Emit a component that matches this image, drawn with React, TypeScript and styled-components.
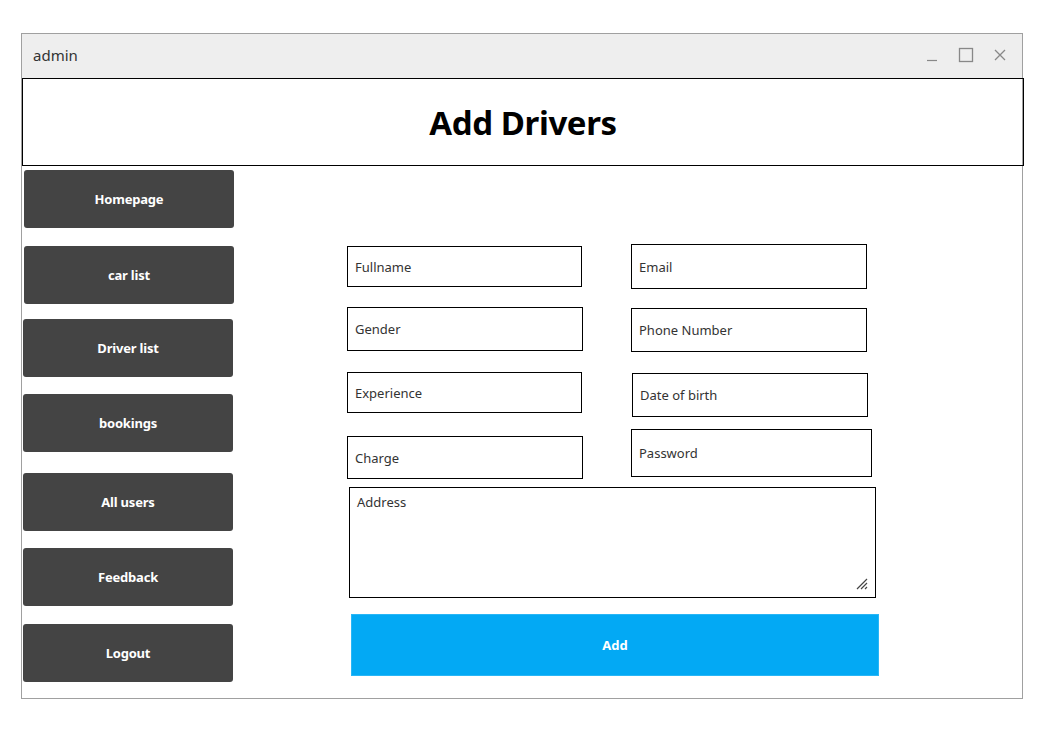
import React from "react";
import styled, { createGlobalStyle } from "styled-components";

const GlobalStyle = createGlobalStyle`
	html, body {
		margin: 0;
		padding: 0;
		background: #fff;
		font-family: "Noto Sans", "Open Sans", sans-serif;
	}
	* {
		box-sizing: border-box;
	}
`;

const Page = styled.div`
	padding: 33px 0 0 21px;
`;

const Window = styled.div`
	width: 1002px;
	height: 666px;
	border: 1px solid #a0a0a0;
	display: flex;
	flex-direction: column;
`;

const TitleBar = styled.div`
	height: 44px;
	background: #eeeeee;
	display: flex;
	align-items: center;
	justify-content: space-between;
	padding: 0 15px 3px 11px;
	color: #333;
	font-size: 15px;
`;

const Controls = styled.div`
	display: flex;
	align-items: center;
	gap: 19px;
`;

const Header = styled.div`
	height: 88px;
	margin-right: -2px;
	border: 1px solid #000;
	display: flex;
	align-items: center;
	justify-content: center;
	font-size: 33px;
	font-weight: 700;
	color: #000;
	letter-spacing: -0.4px;
`;

const Body = styled.div`
	flex: 1;
	display: flex;
`;

const Sidebar = styled.div`
	width: 212px;
	padding-left: 1px;
	display: flex;
	flex-direction: column;
`;

interface NavButtonProps {
	$top: number;
	$left: number;
}

const NavButton = styled.button<NavButtonProps>`
	width: 210px;
	height: 58px;
	margin-top: ${({ $top }) => $top}px;
	margin-left: ${({ $left }) => $left}px;
	background: #444444;
	border: none;
	border-radius: 3px;
	color: #fff;
	font-family: inherit;
	font-size: 13px;
	font-weight: 700;
	letter-spacing: -0.2px;
	cursor: pointer;
`;

const Main = styled.div`
	flex: 1;
	padding: 78px 0 0 113px;
	display: flex;
	flex-direction: column;
`;

interface RowProps {
	$gap: number;
}

const Row = styled.div<RowProps>`
	display: flex;
	align-items: flex-start;
	margin-top: ${({ $gap }) => $gap}px;
`;

interface FieldProps {
	$w: number;
	$h: number;
	$dx?: number;
	$dy?: number;
}

const Field = styled.div<FieldProps>`
	width: ${({ $w }) => $w}px;
	height: ${({ $h }) => $h}px;
	margin-left: ${({ $dx }) => $dx ?? 0}px;
	margin-top: ${({ $dy }) => $dy ?? 0}px;
	border: 1px solid #000;
	display: flex;
	align-items: center;
	padding-left: 7px;
	font-size: 13px;
	color: #333;
`;

const TextArea = styled.div`
	position: relative;
	width: 527px;
	height: 111px;
	margin: 8px 0 0 2px;
	border: 1px solid #000;
	padding: 5px 7px;
	font-size: 13px;
	color: #333;
`;

const Grip = styled.svg`
	position: absolute;
	right: 7px;
	bottom: 7px;
`;

const AddButton = styled.button`
	width: 528px;
	height: 62px;
	margin: 16px 0 0 4px;
	background: #03a9f4;
	border: 1px solid #29b6f6;
	color: #fff;
	font-family: inherit;
	font-size: 13px;
	font-weight: 700;
	cursor: pointer;
`;

const navItems = [
	{ label: "Homepage", top: 4, left: 1 },
	{ label: "car list", top: 18, left: 1 },
	{ label: "Driver list", top: 15, left: 0 },
	{ label: "bookings", top: 17, left: 0 },
	{ label: "All users", top: 21, left: 0 },
	{ label: "Feedback", top: 17, left: 0 },
	{ label: "Logout", top: 18, left: 0 },
];

const App: React.FC = () => {
	return (
		<Page>
			<GlobalStyle />
			<Window>
				<TitleBar>
					<span>admin</span>
					<Controls>
						<svg width="14" height="14" viewBox="0 0 14 14">
							<line x1="2" y1="12.5" x2="12" y2="12.5" stroke="#888" strokeWidth="1.2" />
						</svg>
						<svg width="16" height="16" viewBox="0 0 16 16">
							<rect x="1.5" y="1.5" width="13" height="13" fill="none" stroke="#888" strokeWidth="1.3" />
						</svg>
						<svg width="14" height="14" viewBox="0 0 14 14">
							<path d="M2 2 L12 12 M12 2 L2 12" stroke="#888" strokeWidth="1.3" />
						</svg>
					</Controls>
				</TitleBar>
				<Header>Add Drivers</Header>
				<Body>
					<Sidebar>
						{navItems.map((item) => (
							<NavButton key={item.label} $top={item.top} $left={item.left}>
								{item.label}
							</NavButton>
						))}
					</Sidebar>
					<Main>
						<Row $gap={0}>
							<Field $w={235} $h={41} $dy={2}>Fullname</Field>
							<Field $w={236} $h={45} $dx={49}>Email</Field>
						</Row>
						<Row $gap={18}>
							<Field $w={236} $h={44}>Gender</Field>
							<Field $w={236} $h={44} $dx={48} $dy={1}>Phone Number</Field>
						</Row>
						<Row $gap={20}>
							<Field $w={235} $h={41}>Experience</Field>
							<Field $w={236} $h={44} $dx={50} $dy={1}>Date of birth</Field>
						</Row>
						<Row $gap={12}>
							<Field $w={236} $h={43} $dy={7}>Charge</Field>
							<Field $w={241} $h={48} $dx={48}>Password</Field>
						</Row>
						<TextArea>
							Address
							<Grip width="12" height="12" viewBox="0 0 12 12">
								<path d="M1 11 L11 1 M5 11 L11 5 M9 11 L11 9" stroke="#444" strokeWidth="1.2" />
							</Grip>
						</TextArea>
						<AddButton>Add</AddButton>
					</Main>
				</Body>
			</Window>
		</Page>
	);
};

export default App;
